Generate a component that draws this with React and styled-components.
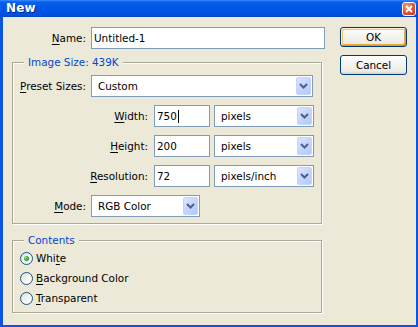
import React from "react";
import styled, { createGlobalStyle } from "styled-components";

const Global = createGlobalStyle`
  html, body { margin: 0; padding: 0; background: #ECE9D8; }
  body { font-family: "DejaVu Sans", Verdana, sans-serif; font-size: 10.4px; color: #000; }
`;

const Window = styled.div`
  width: 418px;
  height: 327px;
  display: flex;
  flex-direction: column;
  background: #0A56E2;
  box-sizing: border-box;
  overflow: hidden;
`;

const TitleBar = styled.div`
  height: 17px;
  flex: none;
  display: flex;
  align-items: center;
  justify-content: space-between;
  padding: 0 2px 0 6px;
  background: linear-gradient(#3A8CFF 0px, #0A5FEA 2px, #0058E8 40%, #0052DF 85%, #0046CC 100%);
`;

const Title = styled.span`
  color: #fff;
  font-family: "DejaVu Sans", Verdana, sans-serif;
  font-weight: bold;
  font-size: 12px;
  letter-spacing: 0.2px;
  text-shadow: 1px 1px 0 #0A1E72;
  margin-top: -1px;
`;

const CloseBtn = styled.div`
  width: 14px;
  height: 14px;
  box-sizing: border-box;
  border: 1px solid #fff;
  border-radius: 3px;
  background: radial-gradient(circle at 35% 30%, #F0A080 0%, #E0522E 55%, #C03A18 100%);
  display: flex;
  align-items: center;
  justify-content: center;
`;

const Body = styled.div`
  flex: 1;
  margin: 0 2px 2px 3px;
  background: #ECE9D8;
  display: flex;
  padding: 10px 0 0 9px;
`;

const FormCol = styled.div`
  width: 312px;
  display: flex;
  flex-direction: column;
`;

const Row = styled.div`
  display: flex;
  align-items: center;
  height: 22px;
`;

const Label = styled.label`
  width: ${(p) => p.$w}px;
  margin-right: ${(p) => p.$gap}px;
  text-align: right;
  white-space: nowrap;
  flex: none;
`;

const Mn = styled.span`
  text-decoration: underline;
  text-underline-offset: 2px;
`;

const Input = styled.div`
  width: ${(p) => p.$w}px;
  height: 22px;
  box-sizing: border-box;
  border: 1px solid #7F9DB9;
  background: #fff;
  display: flex;
  align-items: center;
  padding-left: 2px;
  flex: none;
`;

const Caret = styled.span`
  display: inline-block;
  width: 1px;
  height: 13px;
  background: #000;
  margin-left: 1px;
`;

const Select = styled.div`
  width: ${(p) => p.$w}px;
  height: 22px;
  box-sizing: border-box;
  border: 1px solid #7F9DB9;
  background: #fff;
  display: flex;
  align-items: center;
  justify-content: space-between;
  padding: 1px;
  margin-left: ${(p) => p.$ml || 0}px;
  flex: none;
`;

const SelectText = styled.span`
  padding-left: 5px;
`;

const DropBtn = styled.div`
  width: 15px;
  height: 18px;
  box-sizing: border-box;
  border: 1px solid #C3D3FD;
  border-radius: 2px;
  background: linear-gradient(135deg, #DCE6FE 0%, #C4D4FC 50%, #B4C8F8 100%);
  display: flex;
  align-items: center;
  justify-content: center;
`;

const Group = styled.div`
  position: relative;
  width: 310px;
  height: ${(p) => p.$h}px;
  box-sizing: border-box;
  margin-top: ${(p) => p.$mt}px;
  border: 1px solid #ACA899;
  box-shadow: 1px 1px 0 #fff, inset 1px 1px 0 #fff;
  display: flex;
  flex-direction: column;
  gap: ${(p) => p.$gap}px;
  padding-top: ${(p) => p.$pt}px;
`;

const Legend = styled.span`
  position: absolute;
  top: -8px;
  left: 11px;
  padding: 0 4px;
  background: #ECE9D8;
  color: #0046D5;
  line-height: 14px;
`;

const RadioRow = styled.div`
  display: flex;
  align-items: center;
  height: 20px;
  padding-left: 7px;
  gap: 3px;
`;

const RadioCircle = styled.span`
  width: 13px;
  height: 13px;
  box-sizing: border-box;
  border-radius: 50%;
  border: 1px solid #1C5180;
  background: linear-gradient(135deg, #DCDCD6 0%, #F2F2EE 45%, #FFFFFF 100%);
  display: flex;
  align-items: center;
  justify-content: center;
  flex: none;
`;

const Dot = styled.span`
  width: 5px;
  height: 5px;
  border-radius: 50%;
  background: radial-gradient(circle at 35% 35%, #8AE08A 0%, #21A121 60%, #1A8A1A 100%);
`;

const ButtonCol = styled.div`
  margin-left: 16px;
  display: flex;
  flex-direction: column;
  gap: 8px;
`;

const Button = styled.div`
  width: 67px;
  height: 20px;
  box-sizing: border-box;
  border: 1px solid #003C74;
  border-radius: 3px;
  background: linear-gradient(#FFFFFF 0%, #F6F5F1 40%, #ECEBE6 85%, #D6D0C5 100%);
  display: flex;
  align-items: center;
  justify-content: center;
  box-shadow: ${(p) =>
    p.$default
      ? "inset 1px 1px 0 #FFF0CF, inset -1px -1px 0 #E5971F, inset 2px 2px 0 #F9C764, inset -2px -2px 0 #F0A83A"
      : "none"};
`;

const Chevron = () => (
  <svg width="9" height="6" viewBox="0 0 9 6">
    <path d="M1 1 L4.5 4.5 L8 1" fill="none" stroke="#4D6185" strokeWidth="2" />
  </svg>
);

const Drop = ({ w, ml, children }) => (
  <Select $w={w} $ml={ml}>
    <SelectText>{children}</SelectText>
    <DropBtn>
      <Chevron />
    </DropBtn>
  </Select>
);

const Radio = ({ checked, children }) => (
  <RadioRow>
    <RadioCircle>{checked && <Dot />}</RadioCircle>
    <span>{children}</span>
  </RadioRow>
);

export default function App() {
  return (
    <>
      <Global />
      <Window>
        <TitleBar>
          <Title>New</Title>
          <CloseBtn>
            <svg width="8" height="8" viewBox="0 0 8 8">
              <path d="M1 1 L7 7 M7 1 L1 7" stroke="#fff" strokeWidth="1.8" />
            </svg>
          </CloseBtn>
        </TitleBar>
        <Body>
          <FormCol>
            <Row>
              <Label $w={74} $gap={5}>
                <Mn>N</Mn>ame:
              </Label>
              <Input $w={234}>Untitled-1</Input>
            </Row>
            <Group $h={162} $mt={13} $pt={12} $gap={8}>
              <Legend>Image Size: 439K</Legend>
              <Row>
                <Label $w={73} $gap={5}>
                  <Mn>P</Mn>reset Sizes:
                </Label>
                <Drop w={222}>Custom</Drop>
              </Row>
              <Row>
                <Label $w={135} $gap={6}>
                  <Mn>W</Mn>idth:
                </Label>
                <Input $w={56}>
                  750
                  <Caret />
                </Input>
                <Drop w={100} ml={4}>pixels</Drop>
              </Row>
              <Row>
                <Label $w={135} $gap={6}>
                  <Mn>H</Mn>eight:
                </Label>
                <Input $w={56}>200</Input>
                <Drop w={100} ml={4}>pixels</Drop>
              </Row>
              <Row>
                <Label $w={135} $gap={6}>
                  <Mn>R</Mn>esolution:
                </Label>
                <Input $w={56}>72</Input>
                <Drop w={100} ml={4}>pixels/inch</Drop>
              </Row>
              <Row>
                <Label $w={73} $gap={5}>
                  <Mn>M</Mn>ode:
                </Label>
                <Drop w={109}>RGB Color</Drop>
              </Row>
            </Group>
            <Group $h={73} $mt={16} $pt={7} $gap={0}>
              <Legend>Contents</Legend>
              <Radio checked>
                Whi<Mn>t</Mn>e
              </Radio>
              <Radio>
                <Mn>B</Mn>ackground Color
              </Radio>
              <Radio>
                <Mn>T</Mn>ransparent
              </Radio>
            </Group>
          </FormCol>
          <ButtonCol>
            <Button $default>OK</Button>
            <Button>Cancel</Button>
          </ButtonCol>
        </Body>
      </Window>
    </>
  );
}
